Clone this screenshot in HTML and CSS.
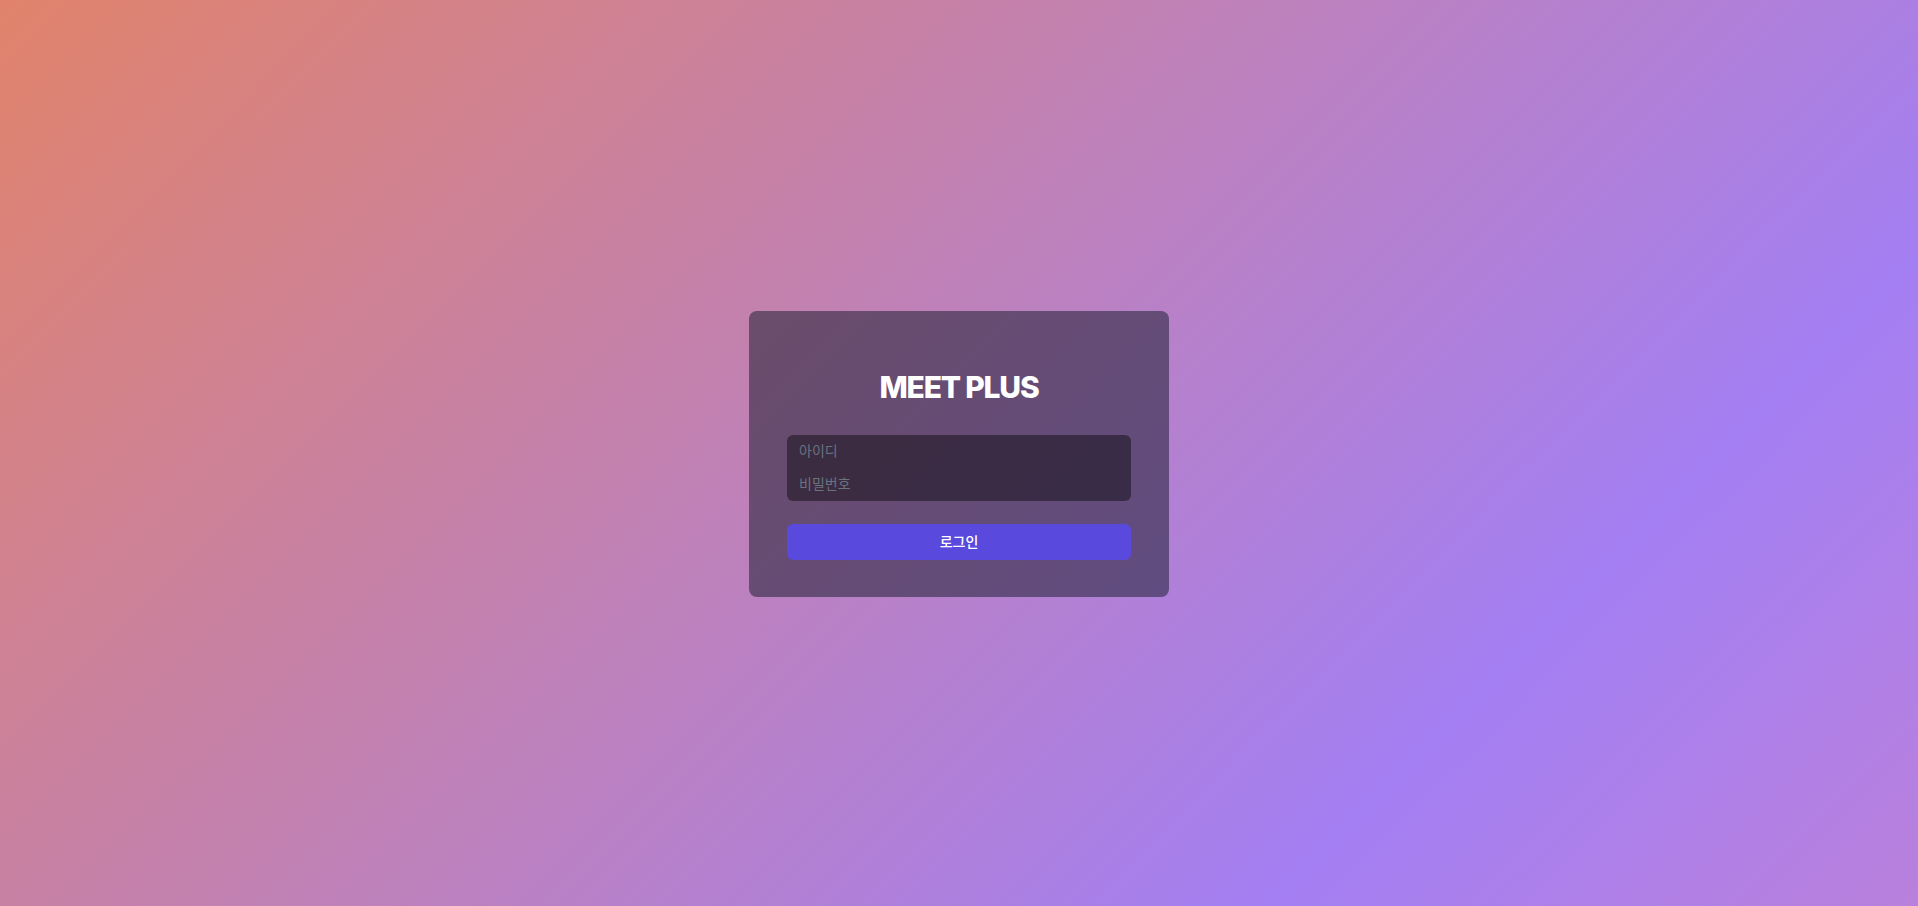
FILE: index.html
```html
<!DOCTYPE html>
<html lang="ko">
<head>
<meta charset="utf-8">
<title>MEET PLUS</title>
<link rel="stylesheet" href="styles.css">
</head>
<body>
<main class="page">
  <section class="card">
    <h1 class="title">MEET PLUS</h1>
    <form class="form">
      <div class="fields">
        <input class="field field-top" type="text" placeholder="아이디">
        <input class="field field-bottom" type="password" placeholder="비밀번호">
      </div>
      <button class="btn" type="button">로그인</button>
    </form>
  </section>
</main>
</body>
</html>
```

FILE: styles.css
```css
* { box-sizing: border-box; }
html, body {
  margin: 0;
  padding: 0;
  height: 100%;
}
body {
  font-family: Inter, "Noto Sans CJK KR", sans-serif;
  background: linear-gradient(135deg, #e1836b 0%, #a47ff3 77%, #b980dc 100%);
  min-height: 906px;
}
.page {
  height: 906px;
  display: flex;
  align-items: center;
  justify-content: center;
}
.card {
  width: 420px;
  height: 286px;
  margin-top: 2px;
  padding: 58px 38px 37px;
  border-radius: 8px;
  background: rgba(17, 24, 39, 0.5);
  display: flex;
  flex-direction: column;
}
.title {
  margin: 0;
  font-size: 30px;
  line-height: 36px;
  font-weight: 800;
  color: #ffffff;
  text-align: center;
  letter-spacing: -1.2px;
}
.form {
  margin-top: 30px;
  display: flex;
  flex-direction: column;
}
.fields {
  display: flex;
  flex-direction: column;
  border-radius: 6px;
  overflow: hidden;
  background: rgba(0, 0, 0, 0.42);
}
.field {
  height: 33px;
  border: none;
  outline: none;
  background: transparent;
  padding: 0 12px 3px;
  font-family: Inter, "Noto Sans CJK KR", sans-serif;
  font-size: 14px;
  color: #e5e7eb;
}
.field::placeholder {
  color: #6b7280;
}
.btn {
  margin-top: 23px;
  height: 36px;
  padding: 0 0 3px;
  border: none;
  border-radius: 6px;
  background: #5949dc;
  color: #ffffff;
  font-family: Inter, "Noto Sans CJK KR", sans-serif;
  font-size: 14px;
  font-weight: 500;
  cursor: pointer;
}
```
